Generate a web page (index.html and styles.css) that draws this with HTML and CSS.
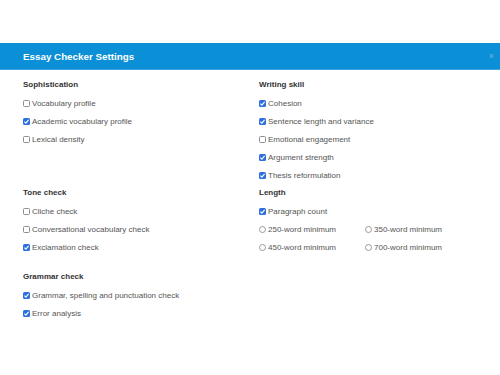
FILE: index.html
```html
<!DOCTYPE html>
<html>
<head>
<meta charset="utf-8">
<link rel="stylesheet" href="styles.css">
</head>
<body>
<div class="modal">
  <div class="header">
    <span class="title">Essay Checker Settings</span>
    <span class="close">×</span>
  </div>
  <div class="body">
    <div class="section">
      <div class="heading">Sophistication</div>
      <div class="item"><span class="cb"></span>Vocabulary profile</div>
      <div class="item"><span class="cb on"><svg viewBox="0 0 8 8"><path d="M1.6 4.2 L3.3 5.8 L6.4 2.2"/></svg></span>Academic vocabulary profile</div>
      <div class="item"><span class="cb"></span>Lexical density</div>
    </div>
    <div class="section">
      <div class="heading">Writing skill</div>
      <div class="item"><span class="cb on"><svg viewBox="0 0 8 8"><path d="M1.6 4.2 L3.3 5.8 L6.4 2.2"/></svg></span>Cohesion</div>
      <div class="item"><span class="cb on"><svg viewBox="0 0 8 8"><path d="M1.6 4.2 L3.3 5.8 L6.4 2.2"/></svg></span>Sentence length and variance</div>
      <div class="item"><span class="cb"></span>Emotional engagement</div>
      <div class="item"><span class="cb on"><svg viewBox="0 0 8 8"><path d="M1.6 4.2 L3.3 5.8 L6.4 2.2"/></svg></span>Argument strength</div>
      <div class="item"><span class="cb on"><svg viewBox="0 0 8 8"><path d="M1.6 4.2 L3.3 5.8 L6.4 2.2"/></svg></span>Thesis reformulation</div>
    </div>
    <div class="section">
      <div class="heading">Tone check</div>
      <div class="item"><span class="cb"></span>Cliche check</div>
      <div class="item"><span class="cb"></span>Conversational vocabulary check</div>
      <div class="item"><span class="cb on"><svg viewBox="0 0 8 8"><path d="M1.6 4.2 L3.3 5.8 L6.4 2.2"/></svg></span>Exclamation check</div>
    </div>
    <div class="section">
      <div class="heading">Length</div>
      <div class="item"><span class="cb on"><svg viewBox="0 0 8 8"><path d="M1.6 4.2 L3.3 5.8 L6.4 2.2"/></svg></span>Paragraph count</div>
      <div class="radios">
        <div class="item"><span class="rb"></span>250-word minimum</div>
        <div class="item"><span class="rb"></span>350-word minimum</div>
        <div class="item"><span class="rb"></span>450-word minimum</div>
        <div class="item"><span class="rb"></span>700-word minimum</div>
      </div>
    </div>
    <div class="section grammar">
      <div class="heading">Grammar check</div>
      <div class="item"><span class="cb on"><svg viewBox="0 0 8 8"><path d="M1.6 4.2 L3.3 5.8 L6.4 2.2"/></svg></span>Grammar, spelling and punctuation check</div>
      <div class="item"><span class="cb on"><svg viewBox="0 0 8 8"><path d="M1.6 4.2 L3.3 5.8 L6.4 2.2"/></svg></span>Error analysis</div>
    </div>
  </div>
</div>
</body>
</html>
```

FILE: styles.css
```css
html, body {
  margin: 0;
  padding: 0;
  background: #ffffff;
  width: 500px;
  height: 375px;
  overflow: hidden;
}
body {
  font-family: "Liberation Sans", Arial, sans-serif;
}
.modal {
  margin-top: 43px;
}
.header {
  height: 27px;
  background: #0b8fd7;
  border-bottom: 1px solid #3ba6e2;
  box-sizing: border-box;
  display: flex;
  align-items: center;
  justify-content: space-between;
  padding: 0 6px 0 23px;
}
.title {
  color: #ffffff;
  font-weight: bold;
  font-size: 9.8px;
}
.close {
  color: #7ab6e0;
  font-size: 9px;
  line-height: 1;
}
.body {
  display: grid;
  grid-template-columns: 236px 1fr;
  padding: 6px 23px 0 23px;
}
.heading {
  font-weight: bold;
  font-size: 8px;
  color: #333333;
  height: 18px;
  line-height: 18px;
}
.item {
  display: flex;
  align-items: center;
  height: 18px;
  font-size: 8px;
  color: #555555;
}
.cb {
  width: 7px;
  height: 7px;
  box-sizing: border-box;
  border: 1px solid #8e8e8e;
  border-radius: 1.5px;
  background: #ffffff;
  margin-right: 2px;
  flex: none;
  display: flex;
}
.cb.on {
  border: none;
  background: #2f6fe0;
}
.cb svg {
  width: 7px;
  height: 7px;
}
.cb svg path {
  fill: none;
  stroke: #ffffff;
  stroke-width: 1.3;
}
.rb {
  width: 7px;
  height: 7px;
  box-sizing: border-box;
  border: 1px solid #9a9a9a;
  border-radius: 50%;
  background: #ffffff;
  margin-right: 2px;
  flex: none;
}
.radios {
  display: grid;
  grid-template-columns: 106px 1fr;
}
.grammar {
  margin-top: 12px;
}
```
